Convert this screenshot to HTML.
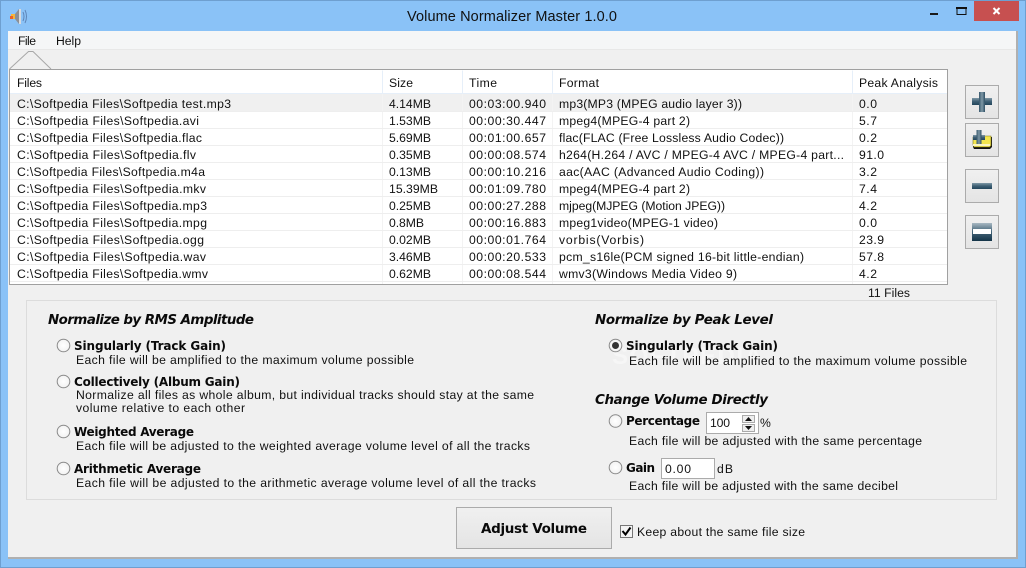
<!DOCTYPE html>
<html><head><meta charset="utf-8"><style>
html,body{margin:0;padding:0;background:#8ac2f7;width:1026px;height:568px;overflow:hidden}
svg{display:block;position:absolute;left:0;top:0}
text{font-family:"Liberation Sans",sans-serif;font-size:12.2px;fill:#111;white-space:pre}
.b{font-family:"DejaVu Sans","Liberation Sans",sans-serif;font-size:12px;font-weight:bold;fill:#0a0a0a}
.h{font-family:"DejaVu Sans","Liberation Sans",sans-serif;font-size:13.4px;font-weight:bold;font-style:italic;fill:#0a0a0a}
</style></head><body>
<svg width="1026" height="568" viewBox="0 0 1026 568" xmlns="http://www.w3.org/2000/svg">
<defs>
<linearGradient id="btn" x1="0" y1="0" x2="0" y2="1"><stop offset="0" stop-color="#f0f0f0"/><stop offset="1" stop-color="#e4e4e4"/></linearGradient>
<linearGradient id="ic" x1="0" y1="0" x2="0" y2="1"><stop offset="0" stop-color="#7f98a6"/><stop offset=".5" stop-color="#3e5f74"/><stop offset="1" stop-color="#23465c"/></linearGradient>
<linearGradient id="ic2" x1="0" y1="0" x2="0" y2="1"><stop offset="0" stop-color="#a8b8c2"/><stop offset=".45" stop-color="#46677b"/><stop offset="1" stop-color="#143448"/></linearGradient>
<linearGradient id="ic3" x1="0" y1="0" x2="1" y2="0"><stop offset="0" stop-color="#37586c"/><stop offset=".5" stop-color="#7f98a6"/><stop offset="1" stop-color="#2e4f64"/></linearGradient>
<radialGradient id="rad"><stop offset="0" stop-color="#fff"/><stop offset="1" stop-color="#f2f2f2"/></radialGradient>
</defs>
<!-- window frame -->
<rect x="0" y="0" width="1026" height="568" fill="#8ac2f7"/>
<rect x=".5" y=".5" width="1025" height="567" fill="none" stroke="#6e9fd0"/>
<rect x="8" y="31" width="1010" height="528" fill="#b0b0b0"/>
<rect x="8" y="31" width="1008" height="526" fill="#f0f0f0"/>
<!-- titlebar icon -->
<rect x="11" y="14" width="4" height="5" fill="#f5b53a"/>
<rect x="10" y="16" width="3" height="3" fill="#e8622a"/>
<path d="M15 14l4-5h2v15h-2l-4-5z" fill="#8b8f96"/>
<path d="M19 9h2v15h-2z" fill="#d8dade"/>
<path d="M23 12q2 4.500 0 9M25 10q3 6.500 0 13" fill="none" stroke="#5f86b8" stroke-width="1"/>
<text x="407" y="21" textLength="210" lengthAdjust="spacing" style="font-size:14.5px">Volume Normalizer Master 1.0.0</text>
<!-- caption buttons -->
<rect x="930" y="13" width="8" height="2" fill="#1a1a1a"/>
<rect x="957" y="8.500" width="9" height="6" fill="none" stroke="#111" stroke-width="1"/>
<rect x="956" y="7" width="11" height="2" fill="#111"/>
<rect x="974" y="1" width="45" height="20" fill="#c75050"/>
<path d="M993.500 8l6 6M999.500 8l-6 6" stroke="#fff" stroke-width="2" fill="none"/>
<!-- menu -->
<rect x="8" y="31" width="1008" height="18" fill="#f5f6f7"/>
<rect x="8" y="49" width="1008" height="1" fill="#e8e8e8"/>
<text x="18" y="45" textLength="18" lengthAdjust="spacing">File</text>
<text x="56" y="45" textLength="25" lengthAdjust="spacing">Help</text>
<!-- tab triangle -->
<path d="M9.500 69L28.500 51.500H33L51 69" fill="#f0f0f0" stroke="#a8a8a8" stroke-width="1"/>
<!-- table -->
<rect x="9.500" y="69.500" width="938" height="215" fill="#fff" stroke="#a0a0a0"/>
<rect x="10" y="94" width="937" height="17" fill="#f0f0f0"/>
<path d="M382.500 70.500v23M462.500 70.500v23M552.500 70.500v23M852.500 70.500v23M10 93.500h937" stroke="#e6eff9" fill="none"/>
<path d="M382.500 94v190M462.500 94v190M552.500 94v190M852.500 94v190" stroke="#f3f3f3" fill="none"/>
<path d="M10 111.500h937M10 128.500h937M10 145.500h937M10 162.500h937M10 179.500h937M10 196.500h937M10 213.500h937M10 230.500h937M10 247.500h937M10 264.500h937M10 281.500h937" stroke="#eeeeee" fill="none"/>
<g>
<text x="17" y="87" textLength="25" lengthAdjust="spacing">Files</text>
<text x="389" y="87" textLength="24" lengthAdjust="spacing">Size</text>
<text x="469" y="87" textLength="28" lengthAdjust="spacing">Time</text>
<text x="559" y="87" textLength="40" lengthAdjust="spacing">Format</text>
<text x="859" y="87" textLength="79" lengthAdjust="spacing">Peak Analysis</text>

<text x="17" y="108" textLength="214" lengthAdjust="spacing">C:\Softpedia Files\Softpedia test.mp3</text>
<text x="389" y="108" textLength="42" lengthAdjust="spacing">4.14MB</text>
<text x="469" y="108" textLength="77" lengthAdjust="spacing">00:03:00.940</text>
<text x="559" y="108" textLength="183" lengthAdjust="spacing">mp3(MP3 (MPEG audio layer 3))</text>
<text x="859" y="108" textLength="18" lengthAdjust="spacing">0.0</text>

<text x="17" y="125" textLength="182" lengthAdjust="spacing">C:\Softpedia Files\Softpedia.avi</text>
<text x="389" y="125" textLength="42" lengthAdjust="spacing">1.53MB</text>
<text x="469" y="125" textLength="77" lengthAdjust="spacing">00:00:30.447</text>
<text x="559" y="125" textLength="131" lengthAdjust="spacing">mpeg4(MPEG-4 part 2)</text>
<text x="859" y="125" textLength="18" lengthAdjust="spacing">5.7</text>

<text x="17" y="142" textLength="185" lengthAdjust="spacing">C:\Softpedia Files\Softpedia.flac</text>
<text x="389" y="142" textLength="42" lengthAdjust="spacing">5.69MB</text>
<text x="469" y="142" textLength="77" lengthAdjust="spacing">00:01:00.657</text>
<text x="559" y="142" textLength="225" lengthAdjust="spacing">flac(FLAC (Free Lossless Audio Codec))</text>
<text x="859" y="142" textLength="18" lengthAdjust="spacing">0.2</text>

<text x="17" y="159" textLength="179" lengthAdjust="spacing">C:\Softpedia Files\Softpedia.flv</text>
<text x="389" y="159" textLength="42" lengthAdjust="spacing">0.35MB</text>
<text x="469" y="159" textLength="77" lengthAdjust="spacing">00:00:08.574</text>
<text x="559" y="159" textLength="285" lengthAdjust="spacing">h264(H.264 / AVC / MPEG-4 AVC / MPEG-4 part...</text>
<text x="859" y="159" textLength="25" lengthAdjust="spacing">91.0</text>

<text x="17" y="176" textLength="188" lengthAdjust="spacing">C:\Softpedia Files\Softpedia.m4a</text>
<text x="389" y="176" textLength="42" lengthAdjust="spacing">0.13MB</text>
<text x="469" y="176" textLength="77" lengthAdjust="spacing">00:00:10.216</text>
<text x="559" y="176" textLength="205" lengthAdjust="spacing">aac(AAC (Advanced Audio Coding))</text>
<text x="859" y="176" textLength="18" lengthAdjust="spacing">3.2</text>

<text x="17" y="193" textLength="189" lengthAdjust="spacing">C:\Softpedia Files\Softpedia.mkv</text>
<text x="389" y="193" textLength="49" lengthAdjust="spacing">15.39MB</text>
<text x="469" y="193" textLength="77" lengthAdjust="spacing">00:01:09.780</text>
<text x="559" y="193" textLength="131" lengthAdjust="spacing">mpeg4(MPEG-4 part 2)</text>
<text x="859" y="193" textLength="18" lengthAdjust="spacing">7.4</text>

<text x="17" y="210" textLength="190" lengthAdjust="spacing">C:\Softpedia Files\Softpedia.mp3</text>
<text x="389" y="210" textLength="42" lengthAdjust="spacing">0.25MB</text>
<text x="469" y="210" textLength="77" lengthAdjust="spacing">00:00:27.288</text>
<text x="559" y="210" textLength="166" lengthAdjust="spacing">mjpeg(MJPEG (Motion JPEG))</text>
<text x="859" y="210" textLength="18" lengthAdjust="spacing">4.2</text>

<text x="17" y="227" textLength="190" lengthAdjust="spacing">C:\Softpedia Files\Softpedia.mpg</text>
<text x="389" y="227" textLength="35" lengthAdjust="spacing">0.8MB</text>
<text x="469" y="227" textLength="77" lengthAdjust="spacing">00:00:16.883</text>
<text x="559" y="227" textLength="159" lengthAdjust="spacing">mpeg1video(MPEG-1 video)</text>
<text x="859" y="227" textLength="18" lengthAdjust="spacing">0.0</text>

<text x="17" y="244" textLength="187" lengthAdjust="spacing">C:\Softpedia Files\Softpedia.ogg</text>
<text x="389" y="244" textLength="42" lengthAdjust="spacing">0.02MB</text>
<text x="469" y="244" textLength="77" lengthAdjust="spacing">00:00:01.764</text>
<text x="559" y="244" textLength="85" lengthAdjust="spacing">vorbis(Vorbis)</text>
<text x="859" y="244" textLength="25" lengthAdjust="spacing">23.9</text>

<text x="17" y="261" textLength="189" lengthAdjust="spacing">C:\Softpedia Files\Softpedia.wav</text>
<text x="389" y="261" textLength="42" lengthAdjust="spacing">3.46MB</text>
<text x="469" y="261" textLength="77" lengthAdjust="spacing">00:00:20.533</text>
<text x="559" y="261" textLength="245" lengthAdjust="spacing">pcm_s16le(PCM signed 16-bit little-endian)</text>
<text x="859" y="261" textLength="25" lengthAdjust="spacing">57.8</text>

<text x="17" y="278" textLength="191" lengthAdjust="spacing">C:\Softpedia Files\Softpedia.wmv</text>
<text x="389" y="278" textLength="42" lengthAdjust="spacing">0.62MB</text>
<text x="469" y="278" textLength="77" lengthAdjust="spacing">00:00:08.544</text>
<text x="559" y="278" textLength="178" lengthAdjust="spacing">wmv3(Windows Media Video 9)</text>
<text x="859" y="278" textLength="18" lengthAdjust="spacing">4.2</text>
</g>
<text x="868" y="297" textLength="42" lengthAdjust="spacing">11 Files</text>
<!-- side buttons -->
<g stroke="#ababab" fill="url(#btn)">
<rect x="965.500" y="85.500" width="33" height="33"/>
<rect x="965.500" y="123.500" width="33" height="33"/>
<rect x="965.500" y="169.500" width="33" height="33"/>
<rect x="965.500" y="215.500" width="33" height="33"/>
</g>
<rect x="972" y="98" width="20" height="7" fill="url(#ic)"/>
<rect x="979" y="92" width="6" height="20" fill="url(#ic3)"/>
<path d="M973 137h19v10l-2 2h-16l-1-2z" fill="#111"/>
<path d="M973 137h2l1-1h15v10h-1v1h-16l-1-2z" fill="#f3e64e" stroke="#7a7220" stroke-width=".6"/>
<rect x="973" y="144" width="17" height="2" fill="#faf6c0"/>
<rect x="973" y="135" width="12" height="5" fill="url(#ic)"/>
<rect x="976.500" y="130" width="5" height="14" fill="url(#ic3)"/>
<rect x="972" y="183" width="20" height="6" fill="url(#ic)"/>
<rect x="972" y="223" width="20" height="18" fill="url(#ic2)"/>
<rect x="973" y="229" width="18" height="5" fill="#fff"/>
<!-- group box -->
<rect x="26.500" y="300.500" width="970" height="199" fill="none" stroke="#dcdcdc"/>
<text x="612" y="364" textLength="150" lengthAdjust="spacing" style="font-size:24px;font-weight:bold;fill:#f6f6f6">SOFTPEDIA</text>
<text class="h" x="48" y="324" textLength="206" lengthAdjust="spacing">Normalize by RMS Amplitude</text>
<text class="h" x="595" y="324" textLength="178" lengthAdjust="spacing">Normalize by Peak Level</text>
<text class="h" x="595" y="404" textLength="173" lengthAdjust="spacing">Change Volume Directly</text>
<!-- radios -->
<g fill="url(#rad)" stroke="#8a8a8a">
<circle cx="63.500" cy="345.500" r="6.300"/><circle cx="63.500" cy="381.500" r="6.300"/><circle cx="63.500" cy="431.500" r="6.300"/><circle cx="63.500" cy="468.500" r="6.300"/>
<circle cx="615.500" cy="345.500" r="6.300"/><circle cx="615.500" cy="421" r="6.300"/><circle cx="615.500" cy="467.500" r="6.300"/>
</g>
<circle cx="615.500" cy="345.500" r="3.500" fill="#333"/>
<text class="b" x="74" y="350" textLength="152" lengthAdjust="spacing">Singularly (Track Gain)</text>
<text x="76" y="364" textLength="338" lengthAdjust="spacing">Each file will be amplified to the maximum volume possible</text>
<text class="b" x="74" y="386" textLength="166" lengthAdjust="spacing">Collectively (Album Gain)</text>
<text x="76" y="399" textLength="458" lengthAdjust="spacing">Normalize all files as whole album, but individual tracks should stay at the same</text>
<text x="76" y="412" textLength="169" lengthAdjust="spacing">volume relative to each other</text>
<text class="b" x="74" y="436" textLength="120" lengthAdjust="spacing">Weighted Average</text>
<text x="76" y="450" textLength="454" lengthAdjust="spacing">Each file will be adjusted to the weighted average volume level of all the tracks</text>
<text class="b" x="74" y="473" textLength="127" lengthAdjust="spacing">Arithmetic Average</text>
<text x="76" y="487" textLength="460" lengthAdjust="spacing">Each file will be adjusted to the arithmetic average volume level of all the tracks</text>

<text class="b" x="626" y="350" textLength="152" lengthAdjust="spacing">Singularly (Track Gain)</text>
<text x="629" y="365" textLength="338" lengthAdjust="spacing">Each file will be amplified to the maximum volume possible</text>
<text class="b" x="626" y="425" textLength="74" lengthAdjust="spacing">Percentage</text>
<rect x="706.500" y="412.500" width="52" height="21" fill="#fff" stroke="#ababab"/>
<text x="710" y="427" textLength="20" lengthAdjust="spacing">100</text>
<rect x="742.500" y="415.500" width="12" height="7" fill="#eee" stroke="#aaa"/>
<rect x="742.500" y="424.500" width="12" height="7" fill="#eee" stroke="#aaa"/>
<path d="M745 421l3.500-4 3.500 4z" fill="#111"/><path d="M745 426l3.500 4 3.500-4z" fill="#111"/>
<text x="760" y="427" textLength="11" lengthAdjust="spacing">%</text>
<text x="629" y="445" textLength="293" lengthAdjust="spacing">Each file will be adjusted with the same percentage</text>
<text class="b" x="626" y="472" textLength="29" lengthAdjust="spacing">Gain</text>
<rect x="661.500" y="458.500" width="53" height="20" fill="#fff" stroke="#ababab"/>
<text x="665" y="473" textLength="26" lengthAdjust="spacing">0.00</text>
<text x="717" y="473" textLength="16" lengthAdjust="spacing">dB</text>
<text x="629" y="490" textLength="269" lengthAdjust="spacing">Each file will be adjusted with the same decibel</text>
<!-- bottom -->
<rect x="456.500" y="507.500" width="155" height="41" fill="url(#btn)" stroke="#ababab"/>
<text class="b" x="481" y="533" textLength="106" lengthAdjust="spacing" style="font-size:13.500px">Adjust Volume</text>
<rect x="620.500" y="525.500" width="12" height="12" fill="#f4f4f4" stroke="#777"/>
<path d="M622.500 531l3 3.500 5-7" fill="none" stroke="#000" stroke-width="2"/>
<text x="637" y="536" textLength="168" lengthAdjust="spacing">Keep about the same file size</text>
</svg>
</body></html>
